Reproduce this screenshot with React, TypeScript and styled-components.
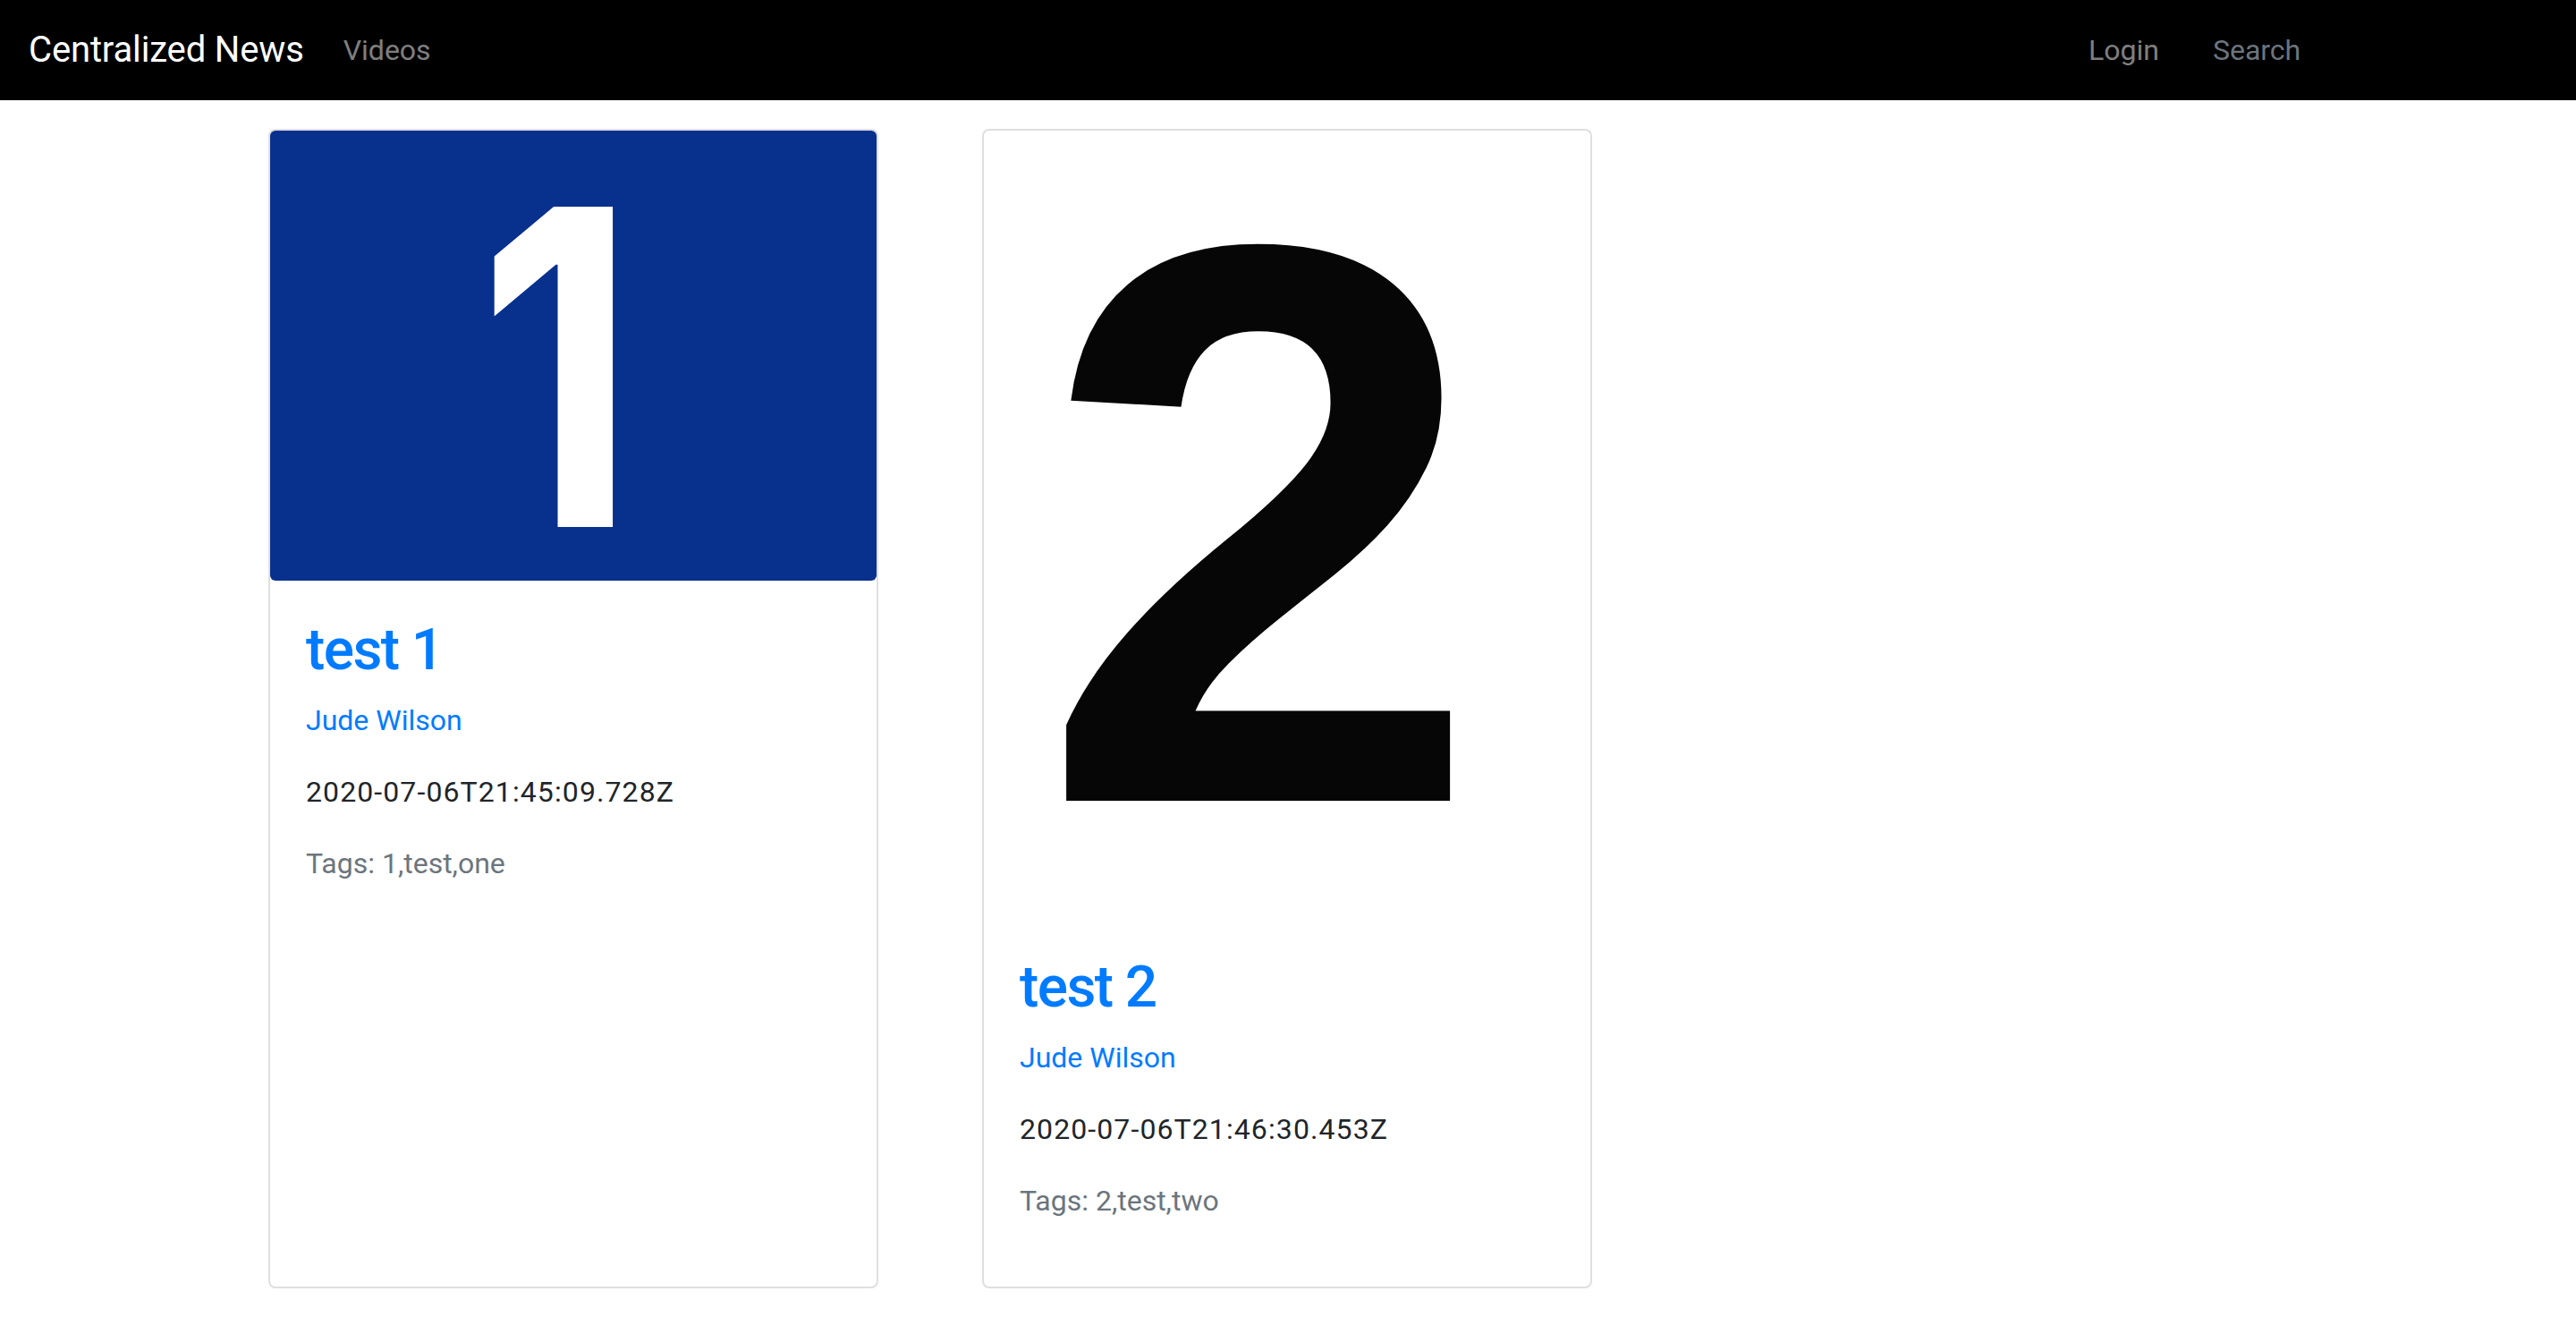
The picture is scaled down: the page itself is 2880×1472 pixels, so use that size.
import React from "react";
import styled, { createGlobalStyle } from "styled-components";

const GlobalStyle = createGlobalStyle`
  html, body {
    margin: 0;
    padding: 0;
    background: #ffffff;
  }
  body {
    font-family: Roboto, "Liberation Sans", Arial, sans-serif;
    color: #212529;
    -webkit-font-smoothing: antialiased;
  }
  * { box-sizing: border-box; }
`;

const Nav = styled.nav`
  height: 112px;
  background: #000000;
  display: flex;
  align-items: center;
  padding: 0 32px;
`;

const Brand = styled.a`
  font-size: 40px;
  line-height: 60px;
  padding: 10px 0;
  margin-right: 28px;
  color: #ffffff;
  text-decoration: none;
  white-space: nowrap;
  letter-spacing: -0.15px;
`;

const NavLink = styled.a<{ $tone?: "muted" | "secondary" }>`
  font-size: 32px;
  line-height: 48px;
  padding: 16px;
  text-decoration: none;
  white-space: nowrap;
  color: ${(p) => (p.$tone === "secondary" ? "#6c757d" : "rgba(255, 255, 255, 0.5)")};
`;

const RightGroup = styled.div`
  margin-left: auto;
  width: 529px;
  display: flex;
  align-items: center;
  gap: 28px;
`;

const Main = styled.main`
  max-width: 2280px;
  margin: 32px auto 0;
  display: flex;
  align-items: stretch;
  gap: 116px;
`;

const Card = styled.article`
  width: 682px;
  border: 2px solid rgba(0, 0, 0, 0.125);
  border-radius: 8px;
  background: #ffffff;
  display: flex;
  flex-direction: column;
`;

const Thumb = styled.svg`
  display: block;
  width: 100%;
  height: auto;
  border-radius: 6px;
`;

const CardBody = styled.div`
  padding: 40px;
`;

const Title = styled.h2`
  margin: 0 0 15px;
  font-size: 64px;
  font-weight: 500;
  line-height: 1.2;
  letter-spacing: -1.6px;
  color: #007bff;
`;

const Line = styled.p<{ $tone: "link" | "body" | "muted" }>`
  margin: 0 0 32px;
  font-size: 32px;
  line-height: 48px;
  letter-spacing: ${(p) => (p.$tone === "body" ? "1.1px" : "0")};
  color: ${(p) => (p.$tone === "link" ? "#007bff" : p.$tone === "muted" ? "#6c757d" : "#212529")};
`;

type Article = {
  title: string;
  author: string;
  date: string;
  tags: string;
  image: {
    h: number;
    bg: string;
    fg: string;
    digit: string;
    size: number;
    weight: number;
    x: number;
    y: number;
    sx: number;
    family: string;
  };
};

const articles: Article[] = [
  {
    title: "test 1",
    author: "Jude Wilson",
    date: "2020-07-06T21:45:09.728Z",
    tags: "Tags: 1,test,one",
    image: { h: 503, bg: "#08318e", fg: "#ffffff", digit: "1", size: 492, weight: 700, x: 321, y: 443, sx: 0.84, family: "Inter, Roboto, sans-serif" },
  },
  {
    title: "test 2",
    author: "Jude Wilson",
    date: "2020-07-06T21:46:30.453Z",
    tags: "Tags: 2,test,two",
    image: { h: 880, bg: "#ffffff", fg: "#060606", digit: "2", size: 891, weight: 700, x: 309, y: 749, sx: 1, family: "'Liberation Sans', Arial, sans-serif" },
  },
];

function Thumbnail({ img }: { img: Article["image"] }) {
  return (
    <Thumb viewBox={`0 0 678 ${img.h}`} width={678} height={img.h}>
      <rect x={0} y={0} width={678} height={img.h} fill={img.bg} />
      <text
        transform={`translate(${img.x} ${img.y}) scale(${img.sx} 1)`}
        x={0}
        y={0}
        textAnchor="middle"
        fill={img.fg}
        fontSize={img.size}
        fontWeight={img.weight}
        fontFamily={img.family}
      >
        {img.digit}
      </text>
    </Thumb>
  );
}

export default function App() {
  return (
    <>
      <GlobalStyle />
      <Nav>
        <Brand href="#">Centralized News</Brand>
        <NavLink href="#">Videos</NavLink>
        <RightGroup>
          <NavLink href="#">Login</NavLink>
          <NavLink href="#" $tone="secondary">Search</NavLink>
        </RightGroup>
      </Nav>
      <Main>
        {articles.map((a) => (
          <Card key={a.title}>
            <Thumbnail img={a.image} />
            <CardBody>
              <Title>{a.title}</Title>
              <Line $tone="link">{a.author}</Line>
              <Line $tone="body">{a.date}</Line>
              <Line $tone="muted">{a.tags}</Line>
            </CardBody>
          </Card>
        ))}
      </Main>
    </>
  );
}
